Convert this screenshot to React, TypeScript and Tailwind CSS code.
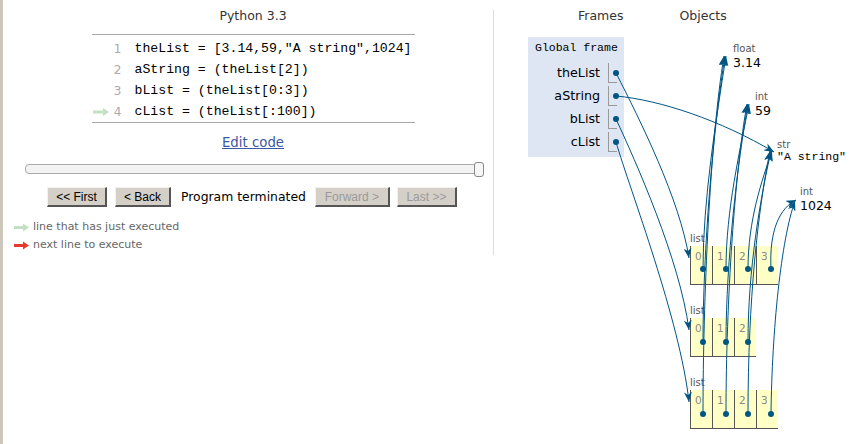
import React from "react";

const ARROW = "#005583";

function LegendArrow({ color }: { color: string }) {
  return (
    <svg width="15" height="9" viewBox="0 0 15 9" className="shrink-0">
      <path d="M0,3 H9 V0.5 L15,4.5 L9,8.5 V6 H0 Z" fill={color} />
    </svg>
  );
}

const code = [
  'theList = [3.14,59,"A string",1024]',
  "aString = (theList[2])",
  "bList = (theList[0:3])",
  "cList = (theList[:100])",
];

function Btn({ label, w, disabled }: { label: string; w: string; disabled?: boolean }) {
  return (
    <div
      className={
        "h-[20px] flex items-center justify-center bg-[#d4d0c8] border-t border-l border-t-[#f4f2ee] border-l-[#f4f2ee] border-r-2 border-b-2 border-r-[#555] border-b-[#555] text-[12px] font-['Liberation_Sans',sans-serif] " +
        w +
        (disabled ? " text-[#9a9a9a]" : " text-black")
      }
    >
      {label}
    </div>
  );
}

function ListBox({ n, top }: { n: number; top: string }) {
  return (
    <div className={"absolute left-[196px] flex flex-col " + top}>
      <div className="h-[12px] leading-[12px] text-[10px] text-[#555] font-['DejaVu_Sans',sans-serif]">list</div>
      <div className="mt-[1px] flex border-b border-[#555] bg-[#ffffc6] h-[39px]">
        {Array.from({ length: n }).map((_, i) => (
          <div key={i} className="w-[22px] h-full border-l border-[#555] pl-[4px] pt-[4px]">
            <div className="text-[10.5px] leading-[12px] text-[#888] font-['DejaVu_Sans',sans-serif]">{i}</div>
          </div>
        ))}
      </div>
    </div>
  );
}

export default function App() {
  const vars = ["theList", "aString", "bList", "cList"];
  const paths = [
    "M616,73 C640,120 680,200 689,258",
    "M616,96 C660,100 720,120 774,152",
    "M616,119 C635,160 680,260 689,330",
    "M616,142 C630,190 680,320 689,402",
    "M703,269 C703,200 716,120 726,56",
    "M703,342 C703,250 713,130 725,56",
    "M703,414 C703,300 710,140 724,56",
    "M726,269 C726,210 740,150 749,104",
    "M726,342 C726,260 738,160 748,104",
    "M726,414 C726,300 735,170 747,104",
    "M748,269 C748,220 762,180 772,151",
    "M748,342 C748,270 760,200 771,151",
    "M748,414 C748,300 758,210 770,151",
    "M771,269 C769,230 780,208 796,200",
    "M771,414 C772,330 781,240 795,201",
  ];
  const dots: [number, number][] = [
    [616, 73], [616, 96], [616, 119], [616, 142],
    [703, 269], [726, 269], [748, 269], [771, 269],
    [703, 342], [726, 342], [748, 342],
    [703, 414], [726, 414], [748, 414], [771, 414],
  ];

  return (
    <div className="w-[855px] h-[444px] bg-white flex overflow-hidden font-['DejaVu_Sans',sans-serif]">
      {/* left panel */}
      <div className="w-[493px] h-full shrink-0 border-l-[3px] border-[#cbc7bb] pl-[10px] pt-[6px] flex flex-col">
        <div className="h-[20px] leading-[20px] text-center text-[12.5px] text-[#333]">Python 3.3</div>

        <div className="mt-[8px] self-center w-[323px] border-y border-[#a8a8a8] pt-[3px]">
          {code.map((line, i) => (
            <div key={i} className="h-[21px] flex items-center">
              <div className="w-[17px] flex justify-start pl-[1px]">
                {i === 3 && (
                  <svg width="16" height="8" viewBox="0 0 16 8">
                    <path d="M0,2.5 H10 V0 L16,4 L10,8 V5.5 H0 Z" fill="#c2e0c2" />
                  </svg>
                )}
              </div>
              <div className="w-[13px] text-right text-[12px] text-[#aaa]">{i + 1}</div>
              <div className="ml-[13px] whitespace-pre text-[13.2px] text-black font-['Liberation_Mono',monospace]">{line}</div>
            </div>
          ))}
        </div>

        <div className="mt-[11px] h-[18px] leading-[18px] text-center text-[13.3px] text-[#3d58a2] underline">Edit code</div>

        <div className="mt-[10px] ml-[12px] w-[459px] h-[15px] relative">
          <div className="mt-[2px] w-[452px] h-[10px] rounded-[4px] border border-[#aaa] bg-[#f3f3f3]" />
          <div className="absolute right-0 top-0 w-[10px] h-[15px] rounded-[3px] border border-[#888] bg-[#f7f7f7]" />
        </div>

        <div className="mt-[10px] ml-[34px] flex items-center h-[20px]">
          <Btn label="<< First" w="w-[60px]" />
          <div className="ml-[8px]"><Btn label="< Back" w="w-[56px]" /></div>
          <div className="ml-[10px] text-[12.4px] text-black whitespace-nowrap">Program terminated</div>
          <div className="ml-[9px]"><Btn label="Forward >" w="w-[75px]" disabled /></div>
          <div className="ml-[7px]"><Btn label="Last >>" w="w-[60px]" disabled /></div>
        </div>

        <div className="mt-[11px] h-[18px] flex items-center ml-[1px]">
          <LegendArrow color="#c2e0c2" />
          <span className="ml-[4px] text-[11px] text-[#666]">line that has just executed</span>
        </div>
        <div className="h-[18px] flex items-center ml-[1px]">
          <LegendArrow color="#e53a2e" />
          <span className="ml-[4px] text-[11px] text-[#666]">next line to execute</span>
        </div>
      </div>

      {/* separator */}
      <div className="w-px shrink-0 bg-[#dddddd] mt-[10px] h-[245px]" />

      {/* right panel: diagram canvas */}
      <div className="flex-1 relative">
        <div className="pt-[6px] h-[26px] flex text-[12.5px] text-[#333] leading-[20px]">
          <span className="ml-[84px]">Frames</span>
          <span className="ml-[56px]">Objects</span>
        </div>

        <div className="ml-[34px] mt-[11px] w-[96px] h-[120px] bg-[#dde6f2] flex flex-col">
          <div className="pt-[4px] pl-[7px] h-[18px] leading-[14px] text-[11.5px] text-black font-['Liberation_Mono',monospace] whitespace-pre">Global frame</div>
          <div className="mt-[8px] flex flex-col gap-[3px]">
            {vars.map((v) => (
              <div key={v} className="h-[20px] flex items-center justify-end pr-[2px]">
                <span className="text-[12.7px] text-black leading-[20px]">{v}</span>
                <div className="ml-[8px] w-[14px] h-[20px] border-l border-[#999] relative">
                  <div className="absolute left-0 bottom-0 w-[8px] border-b border-[#999]" />
                </div>
              </div>
            ))}
          </div>
        </div>

        {/* heap primitives */}
        <div className="absolute left-[239px] top-[43px] flex flex-col">
          <div className="h-[12px] leading-[12px] text-[10px] text-[#555]">float</div>
          <div className="h-[16px] leading-[16px] text-[12.5px] text-black">3.14</div>
        </div>
        <div className="absolute left-[261px] top-[91px] flex flex-col">
          <div className="h-[12px] leading-[12px] text-[10px] text-[#555]">int</div>
          <div className="h-[16px] leading-[16px] text-[12.5px] text-black">59</div>
        </div>
        <div className="absolute left-[283px] top-[139px] flex flex-col">
          <div className="h-[12px] leading-[12px] text-[10px] text-[#555]">str</div>
          <div className="h-[12px] leading-[12px] text-[11.5px] text-black whitespace-pre font-['Liberation_Mono',monospace]">"A string"</div>
        </div>
        <div className="absolute left-[306px] top-[186px] flex flex-col">
          <div className="h-[12px] leading-[12px] text-[10px] text-[#555]">int</div>
          <div className="h-[16px] leading-[16px] text-[12.5px] text-black">1024</div>
        </div>

        <ListBox n={4} top="top-[233px]" />
        <ListBox n={3} top="top-[305px]" />
        <ListBox n={4} top="top-[377px]" />

        <svg
          className="absolute left-0 top-0 pointer-events-none"
          width="361"
          height="444"
          viewBox="494 0 361 444"
        >
          <defs>
            <marker
              id="ah"
              viewBox="0 0 10 8"
              refX="10"
              refY="4"
              markerWidth="10"
              markerHeight="8"
              markerUnits="userSpaceOnUse"
              orient="auto"
            >
              <path d="M0,0 L10,4 L0,8 L3,4 Z" fill={ARROW} />
            </marker>
          </defs>
          {paths.map((d, i) => (
            <path key={i} d={d} fill="none" stroke={ARROW} strokeWidth="1" markerEnd="url(#ah)" />
          ))}
          {dots.map(([x, y], i) => (
            <circle key={i} cx={x} cy={y} r="3" fill={ARROW} />
          ))}
        </svg>
      </div>
    </div>
  );
}
